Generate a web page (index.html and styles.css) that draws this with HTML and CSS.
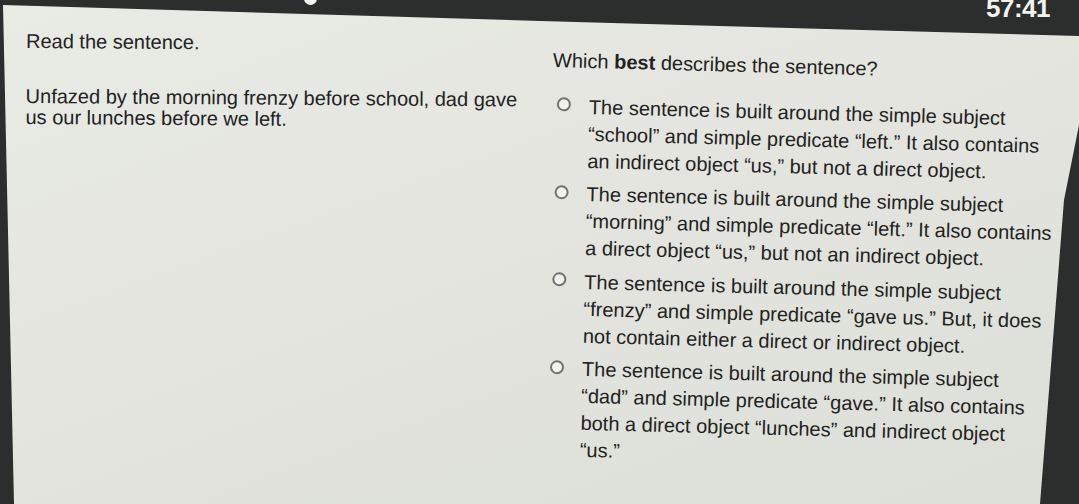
FILE: index.html
```html
<!DOCTYPE html>
<html lang="en">
<head>
<meta charset="utf-8">
<title>Sentence question</title>
<link rel="stylesheet" href="styles.css">
</head>
<body>
<div class="screen">
  <div class="panel-bg"></div>
  <div class="content">
    <header class="bezel">
      <span class="cam-dot"></span>
      <span class="timer">57:41</span>
    </header>
    <main class="main">
      <section class="passage">
        <p class="prompt">Read the sentence.</p>
        <p class="sentence">Unfazed by the morning frenzy before school, dad gave<br>us our lunches before we left.</p>
      </section>
      <section class="question">
        <p class="stem">Which <b>best</b> describes the sentence?</p>
        <ul class="options">
          <li class="option"><span class="radio"></span><span class="label">The sentence is built around the simple subject<br>“school” and simple predicate “left.” It also contains<br>an indirect object “us,” but not a direct object.</span></li>
          <li class="option"><span class="radio"></span><span class="label">The sentence is built around the simple subject<br>“morning” and simple predicate “left.” It also contains<br>a direct object “us,” but not an indirect object.</span></li>
          <li class="option"><span class="radio"></span><span class="label">The sentence is built around the simple subject<br>“frenzy” and simple predicate “gave us.” But, it does<br>not contain either a direct or indirect object.</span></li>
          <li class="option"><span class="radio"></span><span class="label">The sentence is built around the simple subject<br>“dad” and simple predicate “gave.” It also contains<br>both a direct object “lunches” and indirect object<br>“us.”</span></li>
        </ul>
      </section>
    </main>
  </div>
</div>
</body>
</html>
```

FILE: styles.css
```css
html, body {
  margin: 0;
  padding: 0;
  background: #2b2e2d;
}

.screen {
  width: 1079px;
  height: 504px;
  display: grid;
  overflow: hidden;
  background: #2b2e2d;
  font-family: "Liberation Sans", Arial, sans-serif;
  color: #222222;
}

.panel-bg,
.content {
  grid-area: 1 / 1;
}

.panel-bg {
  background: linear-gradient(160deg, #e9ebe5 0%, #e3e5de 45%, #dcdfd7 100%);
  clip-path: polygon(3px 5px, 540px 21px, 1079px 36px, 1079px 125px, 1064px 200px, 1053px 340px, 1040px 504px, 14px 504px);
}

.content {
  display: flex;
  flex-direction: column;
  min-width: 0;
}

.bezel {
  height: 16px;
  display: flex;
  align-items: flex-start;
  padding-right: 29px;
}

.cam-dot {
  width: 13px;
  height: 13px;
  margin-left: 304px;
  margin-top: -8px;
  border-radius: 50%;
  background: #f4f5f2;
}

.timer {
  margin-left: auto;
  font-size: 26px;
  line-height: 16px;
  font-weight: bold;
  color: #f2f2f0;
  letter-spacing: -0.5px;
}

.main {
  display: flex;
}

.passage {
  flex: 0 0 527px;
  padding: 14.6px 0 0 26px;
  font-size: 20px;
  line-height: 21px;
  transform: rotate(0.4deg);
  transform-origin: 26px 32px;
}

.passage p {
  margin: 0;
  white-space: nowrap;
}

.passage .sentence {
  margin-top: 34.5px;
  line-height: 20.5px;
}

.question {
  flex: 0 0 auto;
  padding-top: 30.6px;
  font-size: 20px;
  line-height: 27px;
  transform: rotate(1.5deg);
  transform-origin: 0 46px;
}

.stem {
  margin: 0;
  white-space: nowrap;
}

.stem b {
  font-weight: bold;
}

.options {
  list-style: none;
  margin: 19px 0 0 5px;
  padding: 0;
  display: flex;
  flex-direction: column;
  gap: 6.5px;
}

.option {
  display: flex;
  align-items: flex-start;
  gap: 18px;
}

.radio {
  flex: 0 0 auto;
  width: 10px;
  height: 10px;
  margin-top: 4.9px;
  border: 2px solid #727472;
  border-radius: 50%;
  background: #f1f2ee;
}

.label {
  white-space: nowrap;
}
```
